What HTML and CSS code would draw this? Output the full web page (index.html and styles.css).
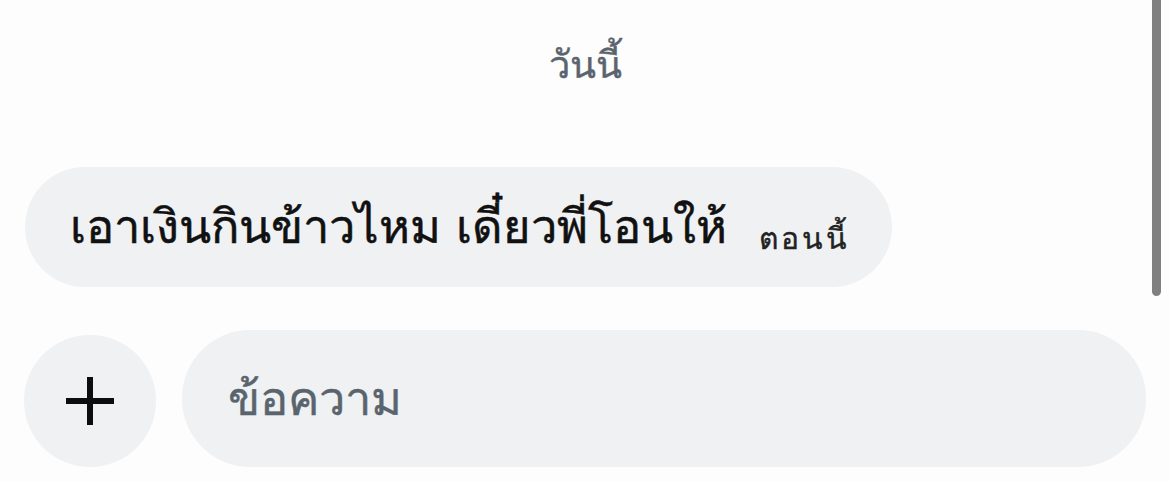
FILE: index.html
```html
<!DOCTYPE html>
<html lang="th">
<head>
<meta charset="utf-8">
<link rel="stylesheet" href="styles.css">
</head>
<body>
<div class="screen">
  <div class="date">วันนี้</div>
  <div class="thread">
    <div class="bubble"><span class="msg">เอาเงินกินข้าวไหม เดี๋ยวพี่โอนให้</span><span class="time">ตอนนี้</span></div>
  </div>
  <div class="composer">
    <button class="add" aria-label="เพิ่ม">
      <svg width="50" height="50" viewBox="0 0 50 50"><path d="M25 1v48M1 25h48" stroke="#0d0d0d" stroke-width="6" fill="none"/></svg>
    </button>
    <div class="input">ข้อความ</div>
  </div>
  <div class="scrollbar"></div>
</div>
</body>
</html>
```
FILE: styles.css
```css
html, body { margin: 0; padding: 0; background: #fdfdfd; }
body { font-family: "DejaVu Sans", sans-serif; color: #111; }
.screen { position: relative; width: 1170px; height: 482px; overflow: hidden; display: flex; flex-direction: column; }
.date { text-align: center; font-size: 38px; color: #5a646d; padding-top: 40px; height: 167px; box-sizing: border-box; line-height: 50px; -webkit-text-stroke: 0.4px #5a646d; }
.thread { padding-left: 25px; }
.bubble { display: inline-block; white-space: nowrap; height: 120px; box-sizing: border-box; padding: 0 42px 0 45px; border-radius: 60px; background: #eff1f3; line-height: 120px; }
.msg { font-size: 47px; -webkit-text-stroke: 0.5px #111; }
.time { font-size: 30px; letter-spacing: 3px; color: #222; margin-left: 32px; vertical-align: -6px; -webkit-text-stroke: 0.4px #222; }
.composer { display: flex; align-items: flex-end; gap: 26px; padding: 43px 24px 0 24px; }
.add { width: 132px; height: 132px; border-radius: 50%; border: none; background: #eff1f3; display: flex; align-items: center; justify-content: center; padding: 0; }
.input { flex: 1; height: 137px; border-radius: 68px; background: #eff1f3; display: flex; align-items: center; padding-left: 46px; font-size: 47px; color: #5a646d; -webkit-text-stroke: 0.4px #5a646d; }
.scrollbar { position: absolute; right: 9px; top: -10px; width: 9px; height: 306px; border-radius: 5px; background: #808080; }
```
